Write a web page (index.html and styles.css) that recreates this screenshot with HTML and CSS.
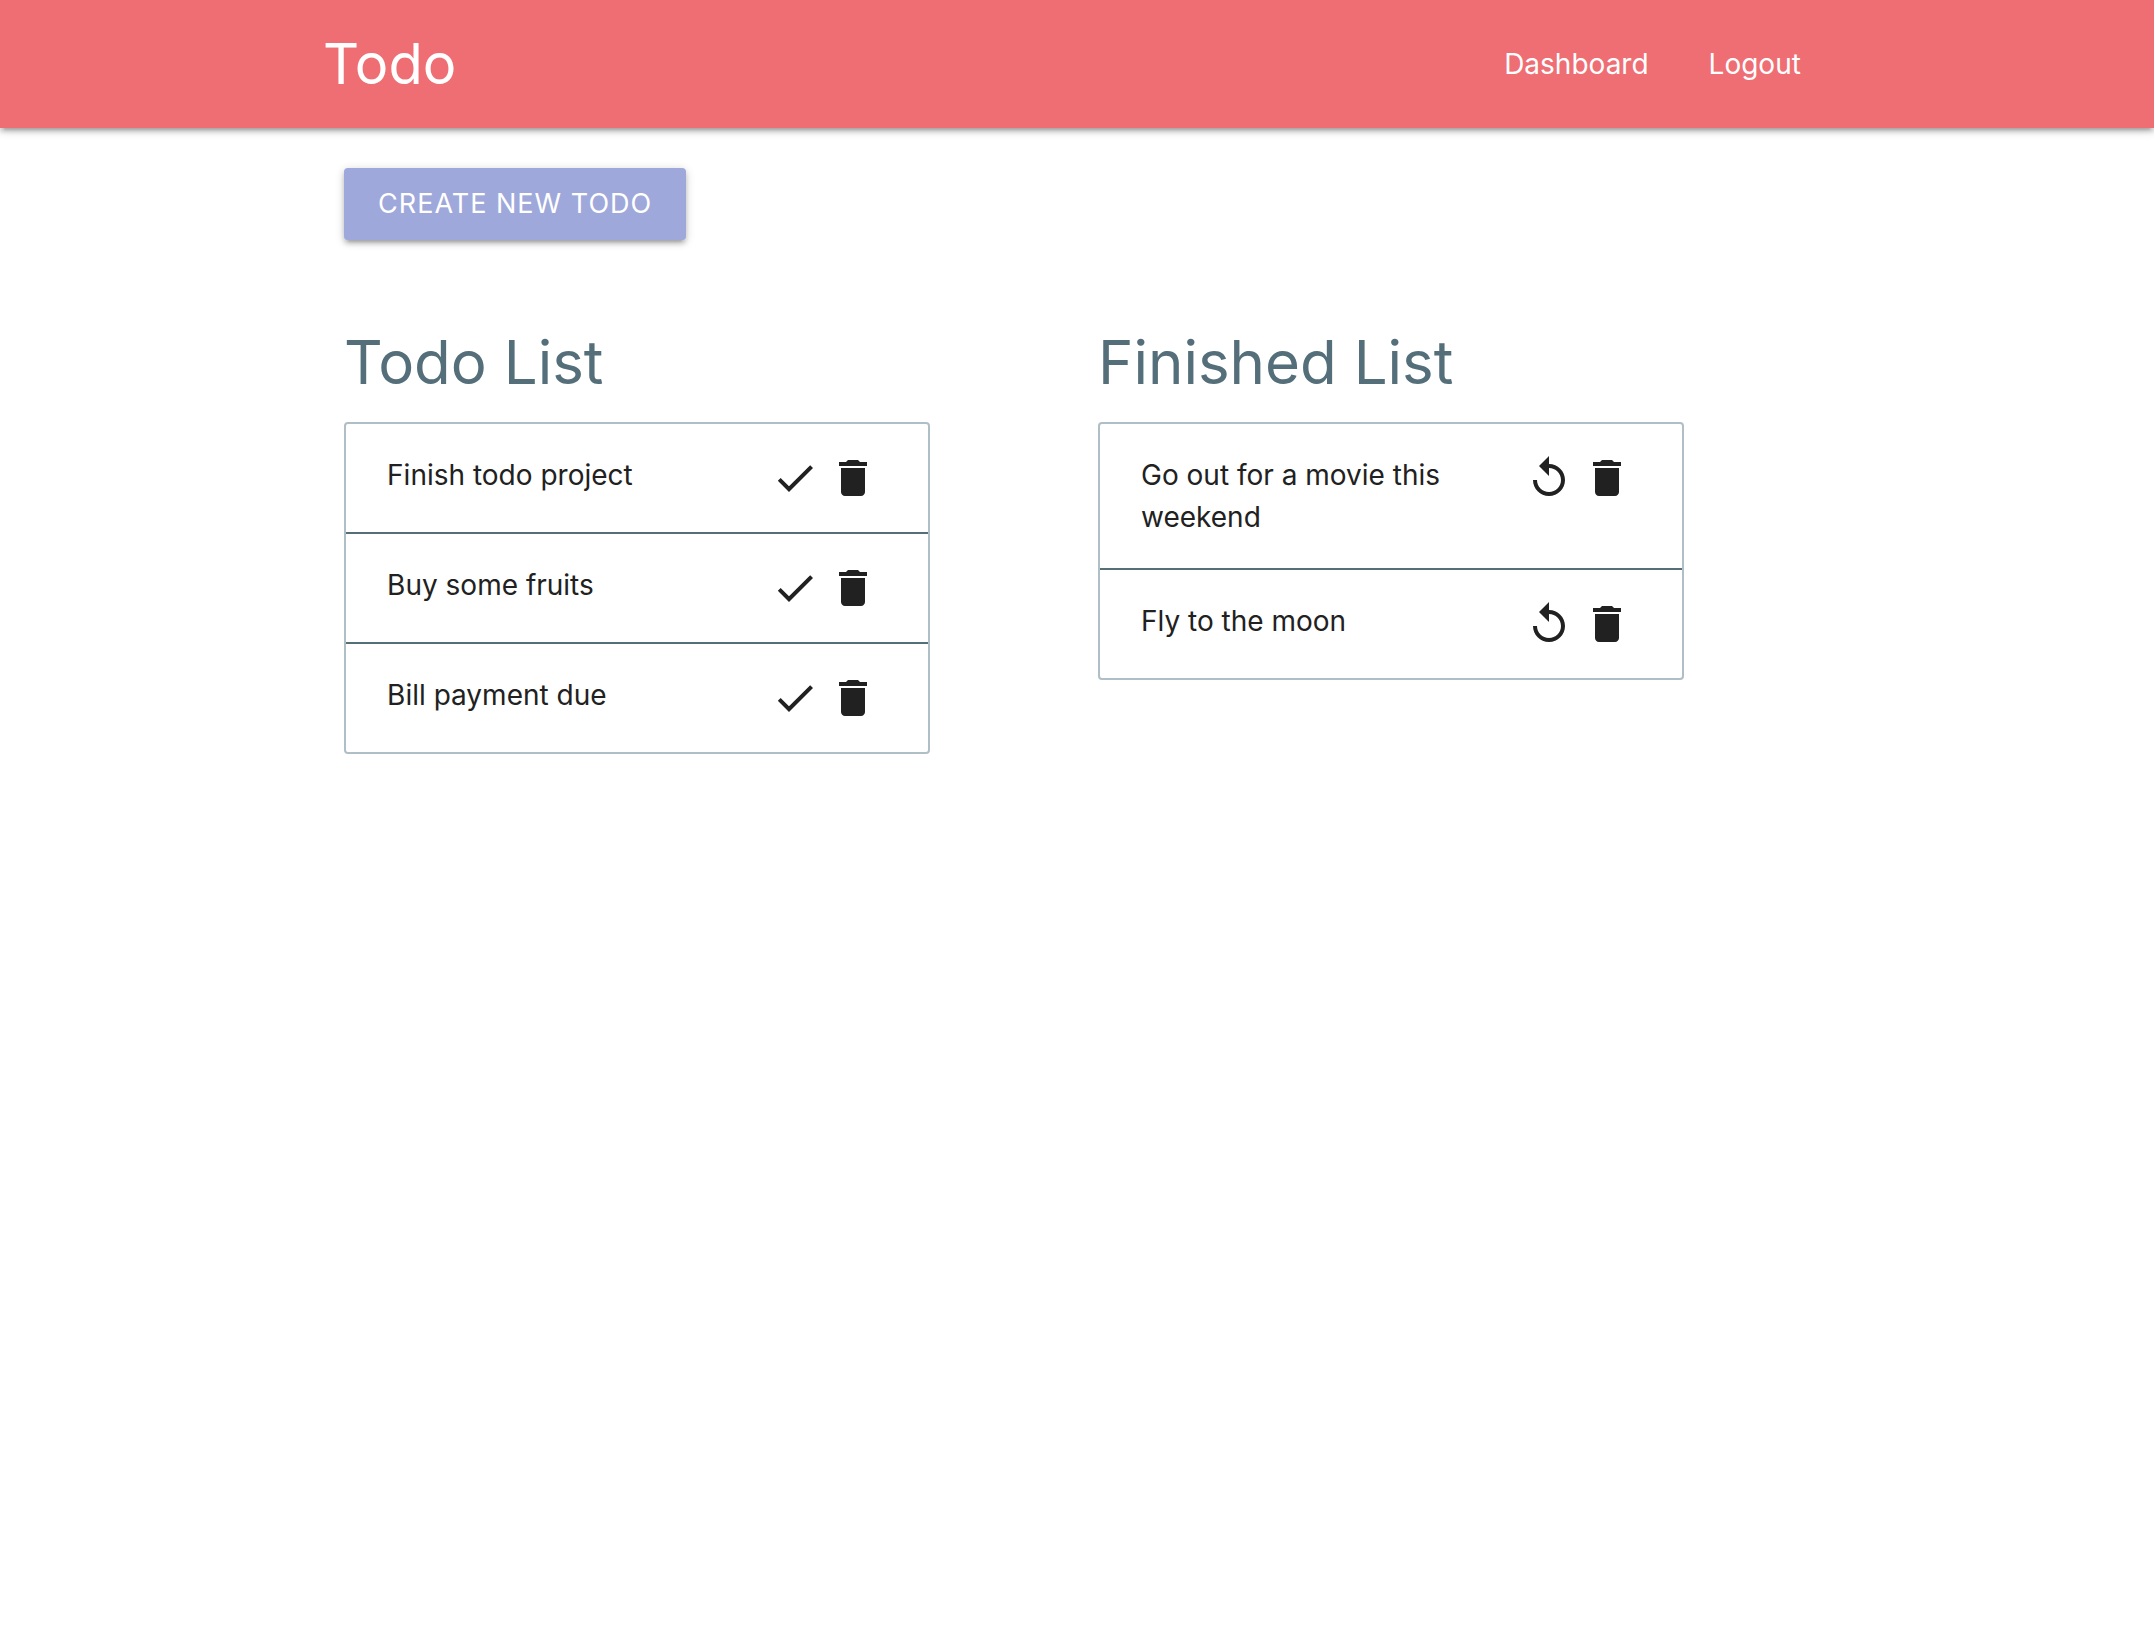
FILE: index.html
```html
<!DOCTYPE html>
<html lang="en">
<head>
  <meta charset="utf-8">
  <meta name="viewport" content="width=device-width, initial-scale=1">
  <title>Todo</title>
  <link rel="stylesheet" href="styles.css">
</head>
<body>
  <svg class="sprite" aria-hidden="true">
    <symbol id="check" viewBox="0 0 24 24"><path d="M9 16.17L4.83 12l-1.42 1.41L9 19 21 7l-1.41-1.41z"/></symbol>
    <symbol id="delete" viewBox="0 0 24 24"><path d="M6 19c0 1.1.9 2 2 2h8c1.1 0 2-.9 2-2V7H6v12zM19 4h-3.500l-1-1h-5l-1 1H5v2h14V4z"/></symbol>
    <symbol id="replay" viewBox="0 0 24 24"><path d="M12 5V1L7 6l5 5V7c3.310 0 6 2.690 6 6s-2.690 6-6 6-6-2.690-6-6H4c0 4.420 3.580 8 8 8s8-3.580 8-8-3.580-8-8-8z"/></symbol>
  </svg>

  <header class="navbar">
    <nav class="container navbar-inner">
      <a class="brand" href="#">Todo</a>
      <ul class="nav-links">
        <li><a href="#">Dashboard</a></li>
        <li><a href="#">Logout</a></li>
      </ul>
    </nav>
  </header>

  <main class="container">
    <div class="toolbar">
      <button class="btn" type="button">Create new todo</button>
    </div>
    <div class="lists">
      <section class="column">
        <h4 class="list-title">Todo List</h4>
        <ul class="collection">
          <li class="item">
            <span class="item-text">Finish todo project</span>
            <button class="icon-btn" type="button" aria-label="Finish"><svg><use href="#check"/></svg></button>
            <button class="icon-btn" type="button" aria-label="Delete"><svg><use href="#delete"/></svg></button>
          </li>
          <li class="item">
            <span class="item-text">Buy some fruits</span>
            <button class="icon-btn" type="button" aria-label="Finish"><svg><use href="#check"/></svg></button>
            <button class="icon-btn" type="button" aria-label="Delete"><svg><use href="#delete"/></svg></button>
          </li>
          <li class="item">
            <span class="item-text">Bill payment due</span>
            <button class="icon-btn" type="button" aria-label="Finish"><svg><use href="#check"/></svg></button>
            <button class="icon-btn" type="button" aria-label="Delete"><svg><use href="#delete"/></svg></button>
          </li>
        </ul>
      </section>
      <section class="column">
        <h4 class="list-title">Finished List</h4>
        <ul class="collection">
          <li class="item">
            <span class="item-text">Go out for a movie this weekend</span>
            <button class="icon-btn" type="button" aria-label="Restore"><svg><use href="#replay"/></svg></button>
            <button class="icon-btn" type="button" aria-label="Delete"><svg><use href="#delete"/></svg></button>
          </li>
          <li class="item">
            <span class="item-text">Fly to the moon</span>
            <button class="icon-btn" type="button" aria-label="Restore"><svg><use href="#replay"/></svg></button>
            <button class="icon-btn" type="button" aria-label="Delete"><svg><use href="#delete"/></svg></button>
          </li>
        </ul>
      </section>
    </div>
  </main>
</body>
</html>
```
FILE: styles.css
```css
* {
  box-sizing: border-box;
}

body {
  margin: 0;
  background: #fff;
  color: #212121;
  font-family: Inter, "Liberation Sans", sans-serif;
  font-size: 28px;
  line-height: 42px;
}

ul {
  margin: 0;
  padding: 0;
  list-style: none;
}

.sprite {
  display: none;
}

.container {
  width: 70%;
  margin: 0 auto;
}

.navbar,
.btn {
  box-shadow: 0 4px 4px 0 rgba(0, 0, 0, 0.14), 0 6px 2px -4px rgba(0, 0, 0, 0.12), 0 2px 10px 0 rgba(0, 0, 0, 0.2);
}

.navbar {
  background: #ee6e73;
}

.navbar-inner {
  display: flex;
  align-items: center;
  justify-content: space-between;
  line-height: 128px;
}

.navbar a {
  display: block;
  color: #fff;
  text-decoration: none;
}

.brand {
  font-size: 56px;
}

.nav-links {
  display: flex;
}

.nav-links a {
  padding: 0 30px;
}

.toolbar {
  padding: 40px 21px 0;
}

.btn {
  display: block;
  height: 72px;
  padding: 0 34px;
  border: 0;
  border-radius: 4px;
  background: #9fa8da;
  color: #fff;
  font: inherit;
  font-size: 27px;
  letter-spacing: 1px;
  text-transform: uppercase;
  cursor: pointer;
}

.lists {
  display: grid;
  grid-template-columns: 1fr 1fr;
  padding-top: 86px;
}

.column {
  padding: 0 147px 0 21px;
}

.list-title {
  margin: 0 0 24px;
  color: #546e7a;
  font-size: 60px;
  font-weight: 400;
  line-height: 72px;
}

.collection {
  border: 2px solid #b0bec5;
  border-radius: 4px;
}

.item {
  display: flex;
  align-items: flex-start;
  gap: 10px;
  padding: 30px 51px 30px 41px;
}

.item + .item {
  border-top: 2px solid #546e7a;
}

.item-text {
  flex: 1;
}

.icon-btn {
  height: 48px;
  padding: 0;
  border: 0;
  background: none;
  color: inherit;
  cursor: pointer;
}

.icon-btn svg {
  display: block;
  width: 48px;
  height: 48px;
  fill: currentColor;
}
```
